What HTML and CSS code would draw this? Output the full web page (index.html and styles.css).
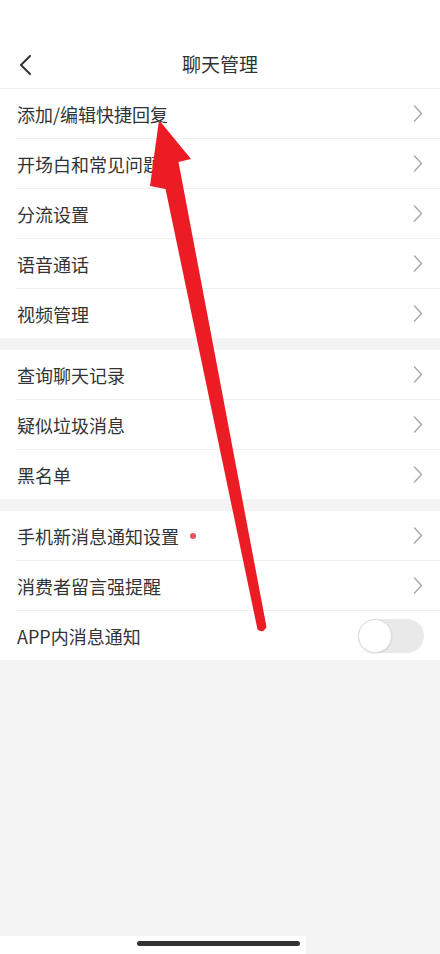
FILE: index.html
```html
<!DOCTYPE html>
<html lang="zh-CN">
<head>
<meta charset="utf-8">
<title>聊天管理</title>
<link rel="stylesheet" href="styles.css">
</head>
<body>
<div class="page">
  <header class="header">
    <div class="navbar">
      <svg class="back" width="14" height="20" viewBox="0 0 14 20"><path d="M12 1 L3 10 L12 19" fill="none" stroke="#333" stroke-width="2" stroke-linecap="round" stroke-linejoin="round"/></svg>
      <div class="title">聊天管理</div>
    </div>
  </header>

  <section class="group">
    <div class="row"><span class="label">添加/编辑快捷回复</span><svg class="chev" width="10" height="17" viewBox="0 0 10 17"><path d="M1.5 1 L8.5 8.5 L1.5 16" fill="none" stroke="#aaa" stroke-width="1.5" stroke-linecap="round" stroke-linejoin="round"/></svg></div>
    <div class="row"><span class="label">开场白和常见问题</span><svg class="chev" width="10" height="17" viewBox="0 0 10 17"><path d="M1.5 1 L8.5 8.5 L1.5 16" fill="none" stroke="#aaa" stroke-width="1.5" stroke-linecap="round" stroke-linejoin="round"/></svg></div>
    <div class="row"><span class="label">分流设置</span><svg class="chev" width="10" height="17" viewBox="0 0 10 17"><path d="M1.5 1 L8.5 8.5 L1.5 16" fill="none" stroke="#aaa" stroke-width="1.5" stroke-linecap="round" stroke-linejoin="round"/></svg></div>
    <div class="row"><span class="label">语音通话</span><svg class="chev" width="10" height="17" viewBox="0 0 10 17"><path d="M1.5 1 L8.5 8.5 L1.5 16" fill="none" stroke="#aaa" stroke-width="1.5" stroke-linecap="round" stroke-linejoin="round"/></svg></div>
    <div class="row"><span class="label">视频管理</span><svg class="chev" width="10" height="17" viewBox="0 0 10 17"><path d="M1.5 1 L8.5 8.5 L1.5 16" fill="none" stroke="#aaa" stroke-width="1.5" stroke-linecap="round" stroke-linejoin="round"/></svg></div>
  </section>

  <section class="group">
    <div class="row"><span class="label">查询聊天记录</span><svg class="chev" width="10" height="17" viewBox="0 0 10 17"><path d="M1.5 1 L8.5 8.5 L1.5 16" fill="none" stroke="#aaa" stroke-width="1.5" stroke-linecap="round" stroke-linejoin="round"/></svg></div>
    <div class="row"><span class="label">疑似垃圾消息</span><svg class="chev" width="10" height="17" viewBox="0 0 10 17"><path d="M1.5 1 L8.5 8.5 L1.5 16" fill="none" stroke="#aaa" stroke-width="1.5" stroke-linecap="round" stroke-linejoin="round"/></svg></div>
    <div class="row"><span class="label">黑名单</span><svg class="chev" width="10" height="17" viewBox="0 0 10 17"><path d="M1.5 1 L8.5 8.5 L1.5 16" fill="none" stroke="#aaa" stroke-width="1.5" stroke-linecap="round" stroke-linejoin="round"/></svg></div>
  </section>

  <section class="group">
    <div class="row"><span class="label">手机新消息通知设置<i class="dot"></i></span><svg class="chev" width="10" height="17" viewBox="0 0 10 17"><path d="M1.5 1 L8.5 8.5 L1.5 16" fill="none" stroke="#aaa" stroke-width="1.5" stroke-linecap="round" stroke-linejoin="round"/></svg></div>
    <div class="row"><span class="label">消费者留言强提醒</span><svg class="chev" width="10" height="17" viewBox="0 0 10 17"><path d="M1.5 1 L8.5 8.5 L1.5 16" fill="none" stroke="#aaa" stroke-width="1.5" stroke-linecap="round" stroke-linejoin="round"/></svg></div>
    <div class="row"><span class="label">APP内消息通知</span><span class="switch"><span class="knob"></span></span></div>
  </section>

  <div class="filler"></div>

  <div class="home-area"><div class="home-strip"><span class="home-bar"></span></div></div>

  <svg class="annotation" width="440" height="954" viewBox="0 0 440 954">
    <path d="M159 120 L191 159 L178.5 162 L266.5 627 Q263 634 257.5 629.5 L165.5 189 L150 186 Z" fill="#ec1c24"/>
  </svg>
</div>
</body>
</html>
```

FILE: styles.css
```css
* { box-sizing: border-box; }
html, body { margin: 0; padding: 0; }
body {
  background: #f4f4f4;
  font-family: "Noto Sans CJK SC", "Noto Sans", sans-serif;
  color: #333;
}
.page {
  position: relative;
  width: 440px;
  min-height: 954px;
  display: flex;
  flex-direction: column;
}
.header {
  background: #fff;
  padding-top: 40px;
  border-bottom: 1px solid #eee;
}
.navbar {
  height: 48px;
  display: flex;
  align-items: center;
  justify-content: center;
  position: relative;
}
.back {
  position: absolute;
  left: 18px;
  top: 15px;
}
.title {
  font-size: 19px;
  line-height: 24px;
  color: #333;
}
.group {
  background: #fff;
  margin-bottom: 12px;
}
.row {
  height: 50px;
  margin-left: 16px;
  padding-right: 17px;
  display: flex;
  align-items: center;
  justify-content: space-between;
  border-bottom: 1px solid #eee;
}
.row:last-child {
  height: 49px;
  border-bottom: none;
}
.label {
  font-size: 18px;
  line-height: 24px;
  color: #333;
  display: flex;
  align-items: center;
  margin-left: 1px;
}
.dot {
  width: 6px;
  height: 6px;
  border-radius: 50%;
  background: #e5575c;
  margin-left: 11px;
}
.chev { display: block; }
.switch {
  width: 66px;
  height: 34px;
  border-radius: 17px;
  background: #e9e9e9;
  margin-right: -1px;
  display: flex;
  align-items: center;
}
.knob {
  width: 34px;
  height: 34px;
  border-radius: 50%;
  background: #fff;
  border: 1px solid #dcdcdc;
  box-shadow: 0 1px 2px rgba(0,0,0,0.08);
}
.filler { flex: 1; }
.home-area {
  height: 18px;
}
.home-strip {
  width: 306px;
  height: 18px;
  background: #fff;
  padding-left: 137px;
  padding-top: 5px;
}
.home-bar {
  display: block;
  width: 163px;
  height: 5px;
  border-radius: 3px;
  background: #333;
}
.annotation {
  position: absolute;
  left: 0;
  top: 0;
  pointer-events: none;
}
```
